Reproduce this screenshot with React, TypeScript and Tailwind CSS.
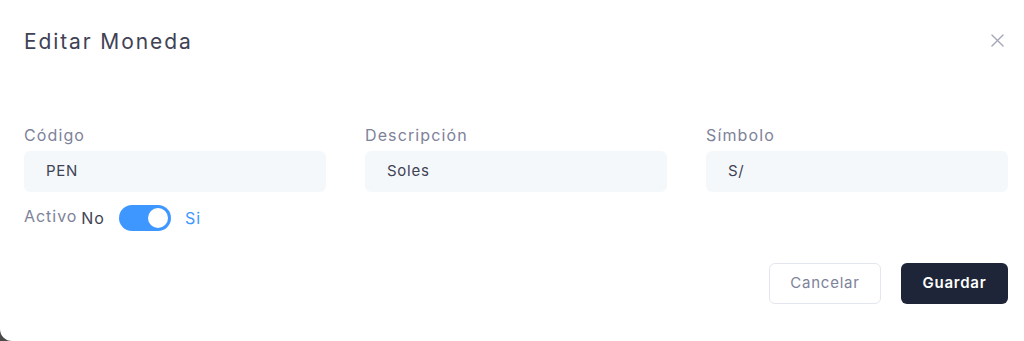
import React from "react";

const Field: React.FC<{ label: string; value: string }> = ({ label, value }) => {
  return (
    <div className="flex flex-col">
      <label className="text-[16px] leading-[22px] tracking-[0.07em] text-[#7e8299] mb-[5px]">{label}</label>
      <div className="h-[41px] rounded-[6px] bg-[#f5f8fa] px-[22px] flex items-center text-[15px] tracking-[0.05em] text-[#3f4254]">
        {value}
      </div>
    </div>
  );
};

export default function App() {
  return (
    <div
      className="h-[341px] w-[1024px] overflow-hidden bg-[#4a4a4a]"
      style={{ fontFamily: "Inter, 'Noto Sans', sans-serif" }}
    >
      <div className="w-[1032px] h-[341px] bg-white rounded-bl-[12px]">
        {/* Header */}
        <div className="flex items-center justify-between pl-6 pr-[28px] pt-[27px]">
          <h2 className="text-[21px] leading-[30px] tracking-[0.09em] text-[#3f4254]">Editar Moneda</h2>
          <button className="text-[#a1a5b7] -mt-1">
            <svg width="13" height="13" viewBox="0 0 14 14" fill="none" stroke="currentColor" strokeWidth="1.4" strokeLinecap="round">
              <path d="M1 1 L13 13 M13 1 L1 13" />
            </svg>
          </button>
        </div>

        {/* Body */}
        <div className="px-6 pt-[67px]">
          <div className="grid grid-cols-3 gap-[39px]">
            <Field label="Código" value="PEN" />
            <Field label="Descripción" value="Soles" />
            <Field label="Símbolo" value="S/" />
          </div>

          <div className="flex items-center mt-[12px] h-[28px]">
            <span className="text-[16px] tracking-[0.06em] text-[#7e8299] -mt-1">Activo</span>
            <span className="text-[16px] tracking-[0.06em] text-[#3f4254] ml-[4px]">No</span>
            <div className="ml-[14px] w-[52px] h-[26px] rounded-full bg-[#3e97ff] flex items-center justify-end pr-[3px]">
              <div className="w-[20px] h-[20px] rounded-full bg-white" />
            </div>
            <span className="text-[16px] tracking-[0.06em] text-[#3e97ff] ml-[14px]">Si</span>
          </div>
        </div>

        {/* Footer */}
        <div className="flex justify-end gap-5 pr-6 mt-[31px]">
          <button className="w-[112px] h-[41px] rounded-[6px] border border-[#e4e6ef] bg-white text-[15px] tracking-[0.05em] text-[#7e8299]">
            Cancelar
          </button>
          <button className="w-[107px] h-[41px] rounded-[6px] bg-[#1e2538] text-[15px] tracking-[0.05em] font-semibold text-white">
            Guardar
          </button>
        </div>
      </div>
    </div>
  );
}
